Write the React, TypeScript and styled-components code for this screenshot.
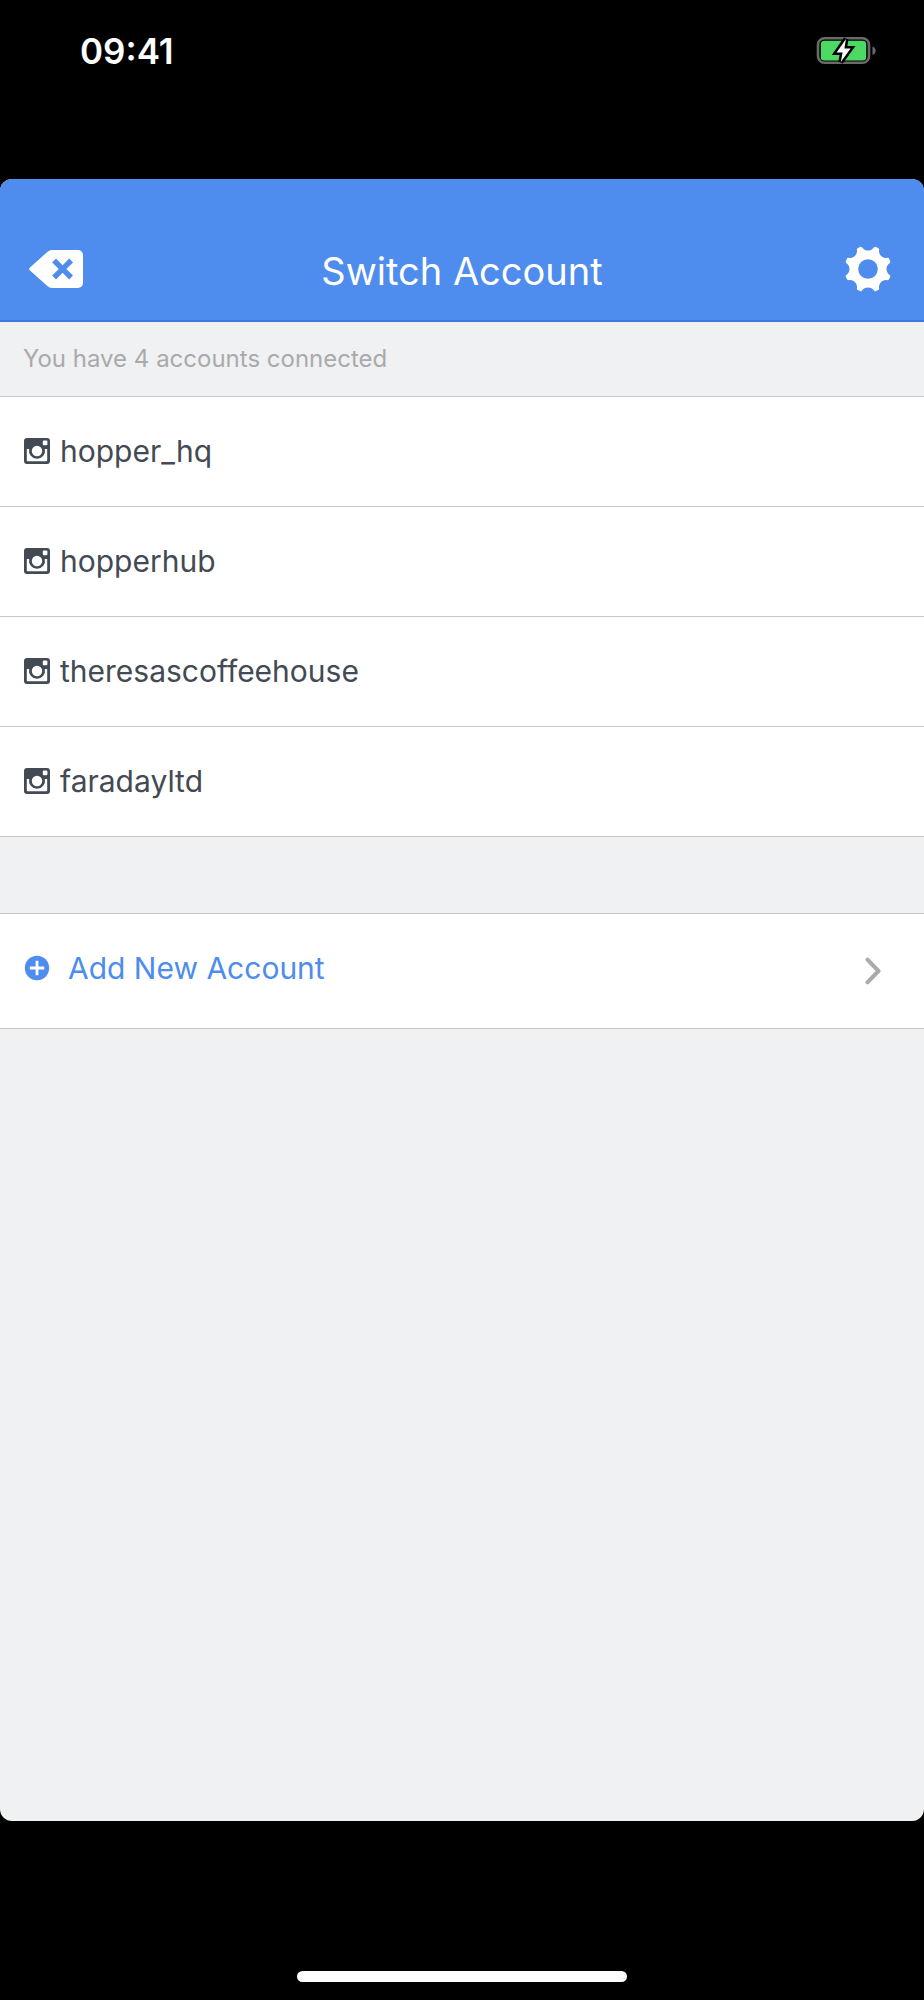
import React from "react";
import styled, { createGlobalStyle } from "styled-components";

const GlobalStyle = createGlobalStyle`
  *, *::before, *::after { box-sizing: border-box; }
  body {
    margin: 0;
    background: #000;
    font-family: Inter, "Liberation Sans", sans-serif;
  }
`;

const Screen = styled.div`
  display: flex;
  flex-direction: column;
  min-height: 100vh;
  background: #000;
`;

const StatusBar = styled.div`
  display: flex;
  justify-content: space-between;
  align-items: flex-start;
  height: 179px;
  padding: 30px 48px 0 80px;
  color: #fff;
`;

const Clock = styled.time`
  font-size: 35px;
  line-height: 42px;
  font-weight: 600;
`;

const BatteryIcon = styled.svg`
  width: 60px;
  height: 42px;
`;

const Sheet = styled.main`
  display: flex;
  flex-direction: column;
  flex: 1;
  border-radius: 12px;
  overflow: hidden;
  background: #f0f1f3;
`;

const Header = styled.header`
  display: grid;
  grid-template-columns: 1fr auto 1fr;
  align-items: center;
  height: 143px;
  padding: 39px 28px 0;
  border-bottom: 2px solid #4079db;
  background: #4e8ced;
  color: #fff;
`;

const Title = styled.h1`
  margin: 0;
  padding-top: 4px;
  font-size: 38px;
  line-height: 48px;
  font-weight: 400;
`;

const IconButton = styled.button<{ $end?: boolean }>`
  display: flex;
  justify-content: center;
  justify-self: ${(p) => (p.$end ? "end" : "start")};
  width: 56px;
  padding: 0;
  border: 0;
  background: none;
  color: inherit;
`;

const Notice = styled.p`
  margin: 0;
  padding: 22px 23px;
  font-size: 24px;
  line-height: 30px;
  color: #aaa;
`;

const List = styled.ul<{ $spaced?: boolean }>`
  margin: ${(p) => (p.$spaced ? "76px" : "0")} 0 0;
  padding: 0;
  list-style: none;
  border-top: 1px solid #c8c8c8;
  background: #fff;
`;

const Row = styled.li`
  border-bottom: 1px solid #c8c8c8;
`;

const AccountButton = styled.button`
  display: flex;
  align-items: center;
  gap: 10px;
  width: 100%;
  height: 109px;
  padding: 0 24px 2px;
  border: 0;
  background: none;
  font: inherit;
  font-size: 30px;
  line-height: 40px;
  color: #434a53;
  text-align: left;
`;

const AddButton = styled(AccountButton)`
  justify-content: space-between;
  height: 114px;
  padding: 0 42px 0 24px;
  color: #4e8ced;
`;

const AddLabel = styled.span`
  display: flex;
  align-items: center;
  gap: 18px;
  padding-bottom: 6px;
`;

const HomeArea = styled.footer`
  display: flex;
  justify-content: center;
  align-items: flex-end;
  height: 179px;
  padding-bottom: 18px;
`;

const HomeIndicator = styled.div`
  width: 330px;
  height: 11px;
  border-radius: 6px;
  background: #fff;
`;

const Battery = () => (
  <BatteryIcon viewBox="0 0 60 42" role="img" aria-label="Battery charging">
    <rect x="2" y="8.2" width="51" height="24.6" rx="6.5" fill="none" stroke="#6a6a6a" strokeWidth="2.6" />
    <rect x="4.8" y="10.8" width="45.4" height="19.6" rx="3.5" fill="#4cd964" />
    <path d="M56.5 16.5v8.4c2.1-.8 3.2-2.4 3.2-4.2s-1.1-3.4-3.2-4.2z" fill="#6a6a6a" />
    <path
      d="M30 9 20.600 22.400h6L24.800 32 34.600 18.400h-6.200z"
      fill="#fff"
      stroke="#000"
      strokeWidth="5"
      strokeLinejoin="miter"
      paintOrder="stroke"
    />
  </BatteryIcon>
);

const BackspaceIcon = () => (
  <svg width="56" height="38" viewBox="0 0 56 38" aria-hidden="true">
    <path
      fill="currentColor"
      fillRule="evenodd"
      d="M24 0h26a5 5 0 0 1 5 5v28a5 5 0 0 1-5 5H24q-2.500 0-4.400-1.700L2 20.600q-1.800-1.600 0-3.200L19.600 1.700Q21.500 0 24 0zM28 8.600 24.200 12.400 30.800 19l-6.600 6.600 3.800 3.800L34.600 22.800l6.600 6.600 3.800-3.800L38.400 19l6.600-6.600L41.200 8.600 34.600 15.200z"
    />
  </svg>
);

const GEAR_TEETH = 8;

const gearOutline = () => {
  const point = (deg: number, radius: number) => {
    const a = (deg * Math.PI) / 180;
    return `${(23 + radius * Math.cos(a)).toFixed(2)} ${(23 + radius * Math.sin(a)).toFixed(2)}`;
  };
  const valley = "A7.2 7.2 0 0 0";
  let d = "";
  for (let i = 0; i < GEAR_TEETH; i++) {
    const mid = 22.5 + i * 45;
    d += `${i ? valley : "M"} ${point(mid - 7, 22.6)} `;
    d += `Q ${point(mid - 5, 24)} ${point(mid, 23.4)} Q ${point(mid + 5, 24)} ${point(mid + 7, 22.6)} `;
  }
  return `${d} ${valley} ${point(15.5, 22.6)} Z M13.200 23a9.800 9.800 0 1 0 19.600 0a9.800 9.800 0 1 0-19.600 0z`;
};

const GearIcon = () => (
  <svg width="46" height="46" viewBox="0 0 46 46" aria-hidden="true">
    <path fill="currentColor" fillRule="evenodd" d={gearOutline()} />
  </svg>
);

const CameraIcon = () => (
  <svg width="26" height="26" viewBox="0 0 26 26" aria-hidden="true">
    <path
      fill="currentColor"
      fillRule="evenodd"
      d="M3 0h20a3 3 0 0 1 3 3v20a3 3 0 0 1-3 3H3a3 3 0 0 1-3-3V3a3 3 0 0 1 3-3zM19.800 2.600a1 1 0 0 0-1 1v2.600a1 1 0 0 0 1 1h2.600a1 1 0 0 0 1-1V3.600a1 1 0 0 0-1-1zM2.800 11v11.400q0 .8.8.8h18.800q.8 0 .8-.8V11h-2.400a8 8 0 1 1-15.600 0zM13 7.800a5.200 5.200 0 1 0 0 10.400a5.200 5.200 0 1 0 0-10.400z"
    />
  </svg>
);

const PlusCircleIcon = () => (
  <svg width="26" height="26" viewBox="0 0 26 26" aria-hidden="true">
    <circle cx="13" cy="13" r="12.2" fill="currentColor" />
    <path d="M13 5.800v14.400M5.800 13h14.400" stroke="#fff" strokeWidth="2.800" />
  </svg>
);

const ChevronIcon = () => (
  <svg width="18" height="28" viewBox="0 0 18 28" aria-hidden="true">
    <path
      d="M3.500 2.600 14.500 14 3.500 25.400"
      fill="none"
      stroke="#aaa"
      strokeWidth="4"
      strokeLinecap="round"
      strokeLinejoin="round"
    />
  </svg>
);

const accounts = ["hopper_hq", "hopperhub", "theresascoffeehouse", "faradayltd"];

export default function App() {
  return (
    <Screen>
      <GlobalStyle />
      <StatusBar>
        <Clock>09:41</Clock>
        <Battery />
      </StatusBar>
      <Sheet>
        <Header>
          <IconButton type="button" aria-label="Back">
            <BackspaceIcon />
          </IconButton>
          <Title>Switch Account</Title>
          <IconButton type="button" aria-label="Settings" $end>
            <GearIcon />
          </IconButton>
        </Header>
        <Notice>You have {accounts.length} accounts connected</Notice>
        <List>
          {accounts.map((name) => (
            <Row key={name}>
              <AccountButton type="button">
                <CameraIcon />
                {name}
              </AccountButton>
            </Row>
          ))}
        </List>
        <List $spaced>
          <Row>
            <AddButton type="button">
              <AddLabel>
                <PlusCircleIcon />
                Add New Account
              </AddLabel>
              <ChevronIcon />
            </AddButton>
          </Row>
        </List>
      </Sheet>
      <HomeArea>
        <HomeIndicator />
      </HomeArea>
    </Screen>
  );
}
